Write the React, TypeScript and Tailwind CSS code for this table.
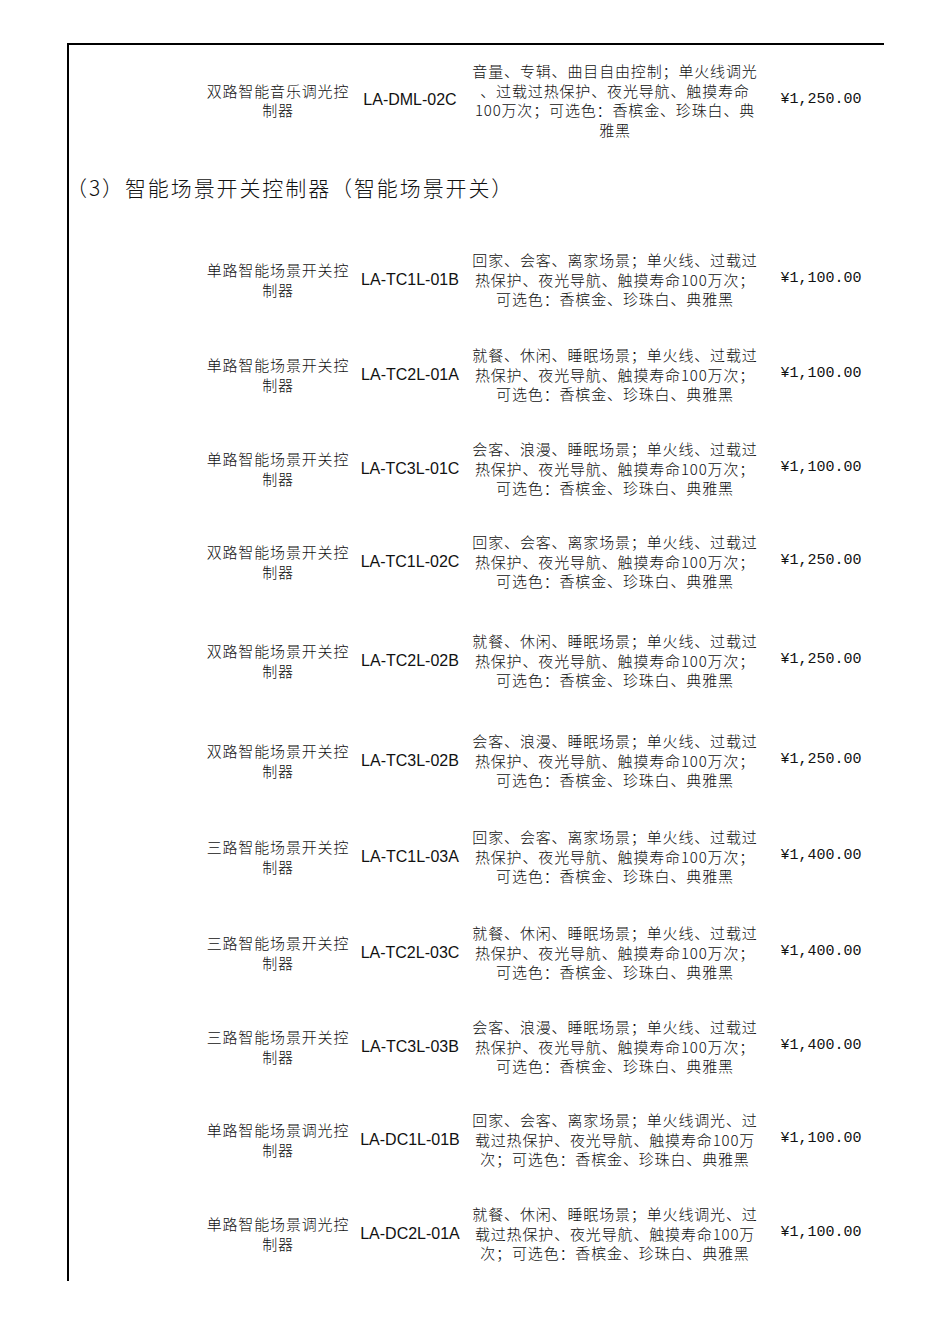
const cjk = "font-['Noto_Sans_CJK_SC',sans-serif] font-light";

type Row = {
  name: string[];
  code: string;
  desc: string[];
  price: string;
  h: string;
};

const TC_TAIL = ['热保护、夜光导航、触摸寿命100万次；', '可选色：香槟金、珍珠白、典雅黑'];
const DC_TAIL = ['载过热保护、夜光导航、触摸寿命100万', '次；可选色：香槟金、珍珠白、典雅黑'];

const rows: Row[] = [
  { name: ['单路智能场景开关控', '制器'], code: 'LA-TC1L-01B', desc: ['回家、会客、离家场景；单火线、过载过', ...TC_TAIL], price: '¥1,100.00', h: 'h-[95px]' },
  { name: ['单路智能场景开关控', '制器'], code: 'LA-TC2L-01A', desc: ['就餐、休闲、睡眠场景；单火线、过载过', ...TC_TAIL], price: '¥1,100.00', h: 'h-[95px]' },
  { name: ['单路智能场景开关控', '制器'], code: 'LA-TC3L-01C', desc: ['会客、浪漫、睡眠场景；单火线、过载过', ...TC_TAIL], price: '¥1,100.00', h: 'h-[93px]' },
  { name: ['双路智能场景开关控', '制器'], code: 'LA-TC1L-02C', desc: ['回家、会客、离家场景；单火线、过载过', ...TC_TAIL], price: '¥1,250.00', h: 'h-[93px]' },
  { name: ['双路智能场景开关控', '制器'], code: 'LA-TC2L-02B', desc: ['就餐、休闲、睡眠场景；单火线、过载过', ...TC_TAIL], price: '¥1,250.00', h: 'h-[105px]' },
  { name: ['双路智能场景开关控', '制器'], code: 'LA-TC3L-02B', desc: ['会客、浪漫、睡眠场景；单火线、过载过', ...TC_TAIL], price: '¥1,250.00', h: 'h-[95px]' },
  { name: ['三路智能场景开关控', '制器'], code: 'LA-TC1L-03A', desc: ['回家、会客、离家场景；单火线、过载过', ...TC_TAIL], price: '¥1,400.00', h: 'h-[97px]' },
  { name: ['三路智能场景开关控', '制器'], code: 'LA-TC2L-03C', desc: ['就餐、休闲、睡眠场景；单火线、过载过', ...TC_TAIL], price: '¥1,400.00', h: 'h-[95px]' },
  { name: ['三路智能场景开关控', '制器'], code: 'LA-TC3L-03B', desc: ['会客、浪漫、睡眠场景；单火线、过载过', ...TC_TAIL], price: '¥1,400.00', h: 'h-[93px]' },
  { name: ['单路智能场景调光控', '制器'], code: 'LA-DC1L-01B', desc: ['回家、会客、离家场景；单火线调光、过', ...DC_TAIL], price: '¥1,100.00', h: 'h-[93px]' },
  { name: ['单路智能场景调光控', '制器'], code: 'LA-DC2L-01A', desc: ['就餐、休闲、睡眠场景；单火线调光、过', ...DC_TAIL], price: '¥1,100.00', h: 'h-[95px]' },
];

const firstRow: Row = {
  name: ['双路智能音乐调光控', '制器'],
  code: 'LA-DML-02C',
  desc: ['音量、专辑、曲目自由控制；单火线调光', '、过载过热保护、夜光导航、触摸寿命', '100万次；可选色：香槟金、珍珠白、典', '雅黑'],
  price: '¥1,250.00',
  h: 'h-[110px]',
};

function Lines({ lines }: { lines: string[] }) {
  return (
    <div className={`${cjk} text-[15px] tracking-[0.85px] leading-[19.5px] text-center text-[#111]`}>
      {lines.map((l, i) => (
        <div key={i} className="whitespace-nowrap">{l}</div>
      ))}
    </div>
  );
}

function ProductRow({ row }: { row: Row }) {
  return (
    <div className={`grid grid-cols-[131px_156px_108px_302px_110px] items-center ${row.h}`}>
      <div />
      <div className="flex justify-center"><Lines lines={row.name} /></div>
      <div className="flex justify-center font-['Liberation_Sans',sans-serif] text-[16px] text-[#111] whitespace-nowrap">
        {row.code}
      </div>
      <div className="flex justify-center"><Lines lines={row.desc} /></div>
      <div className="flex justify-center font-['Liberation_Mono',monospace] text-[15px] text-[#111] whitespace-nowrap">
        {row.price}
      </div>
    </div>
  );
}

export default function App() {
  return (
    <div className="min-h-[1344px] w-[950px] bg-white">
      <div className="pt-[43px]">
        <div className="ml-[67px] w-[817px] border-l-2 border-t-2 border-black">
          <ProductRow row={firstRow} />
          <div className="h-[77px] pt-[18px]">
            <h2 className={`${cjk} -ml-[3px] text-[21px] tracking-[1.9px] leading-[28px] text-[#111]`}>
              （3）智能场景开关控制器（智能场景开关）
            </h2>
          </div>
          {rows.map(r => (
            <ProductRow key={r.code} row={r} />
          ))}
        </div>
      </div>
    </div>
  );
}
